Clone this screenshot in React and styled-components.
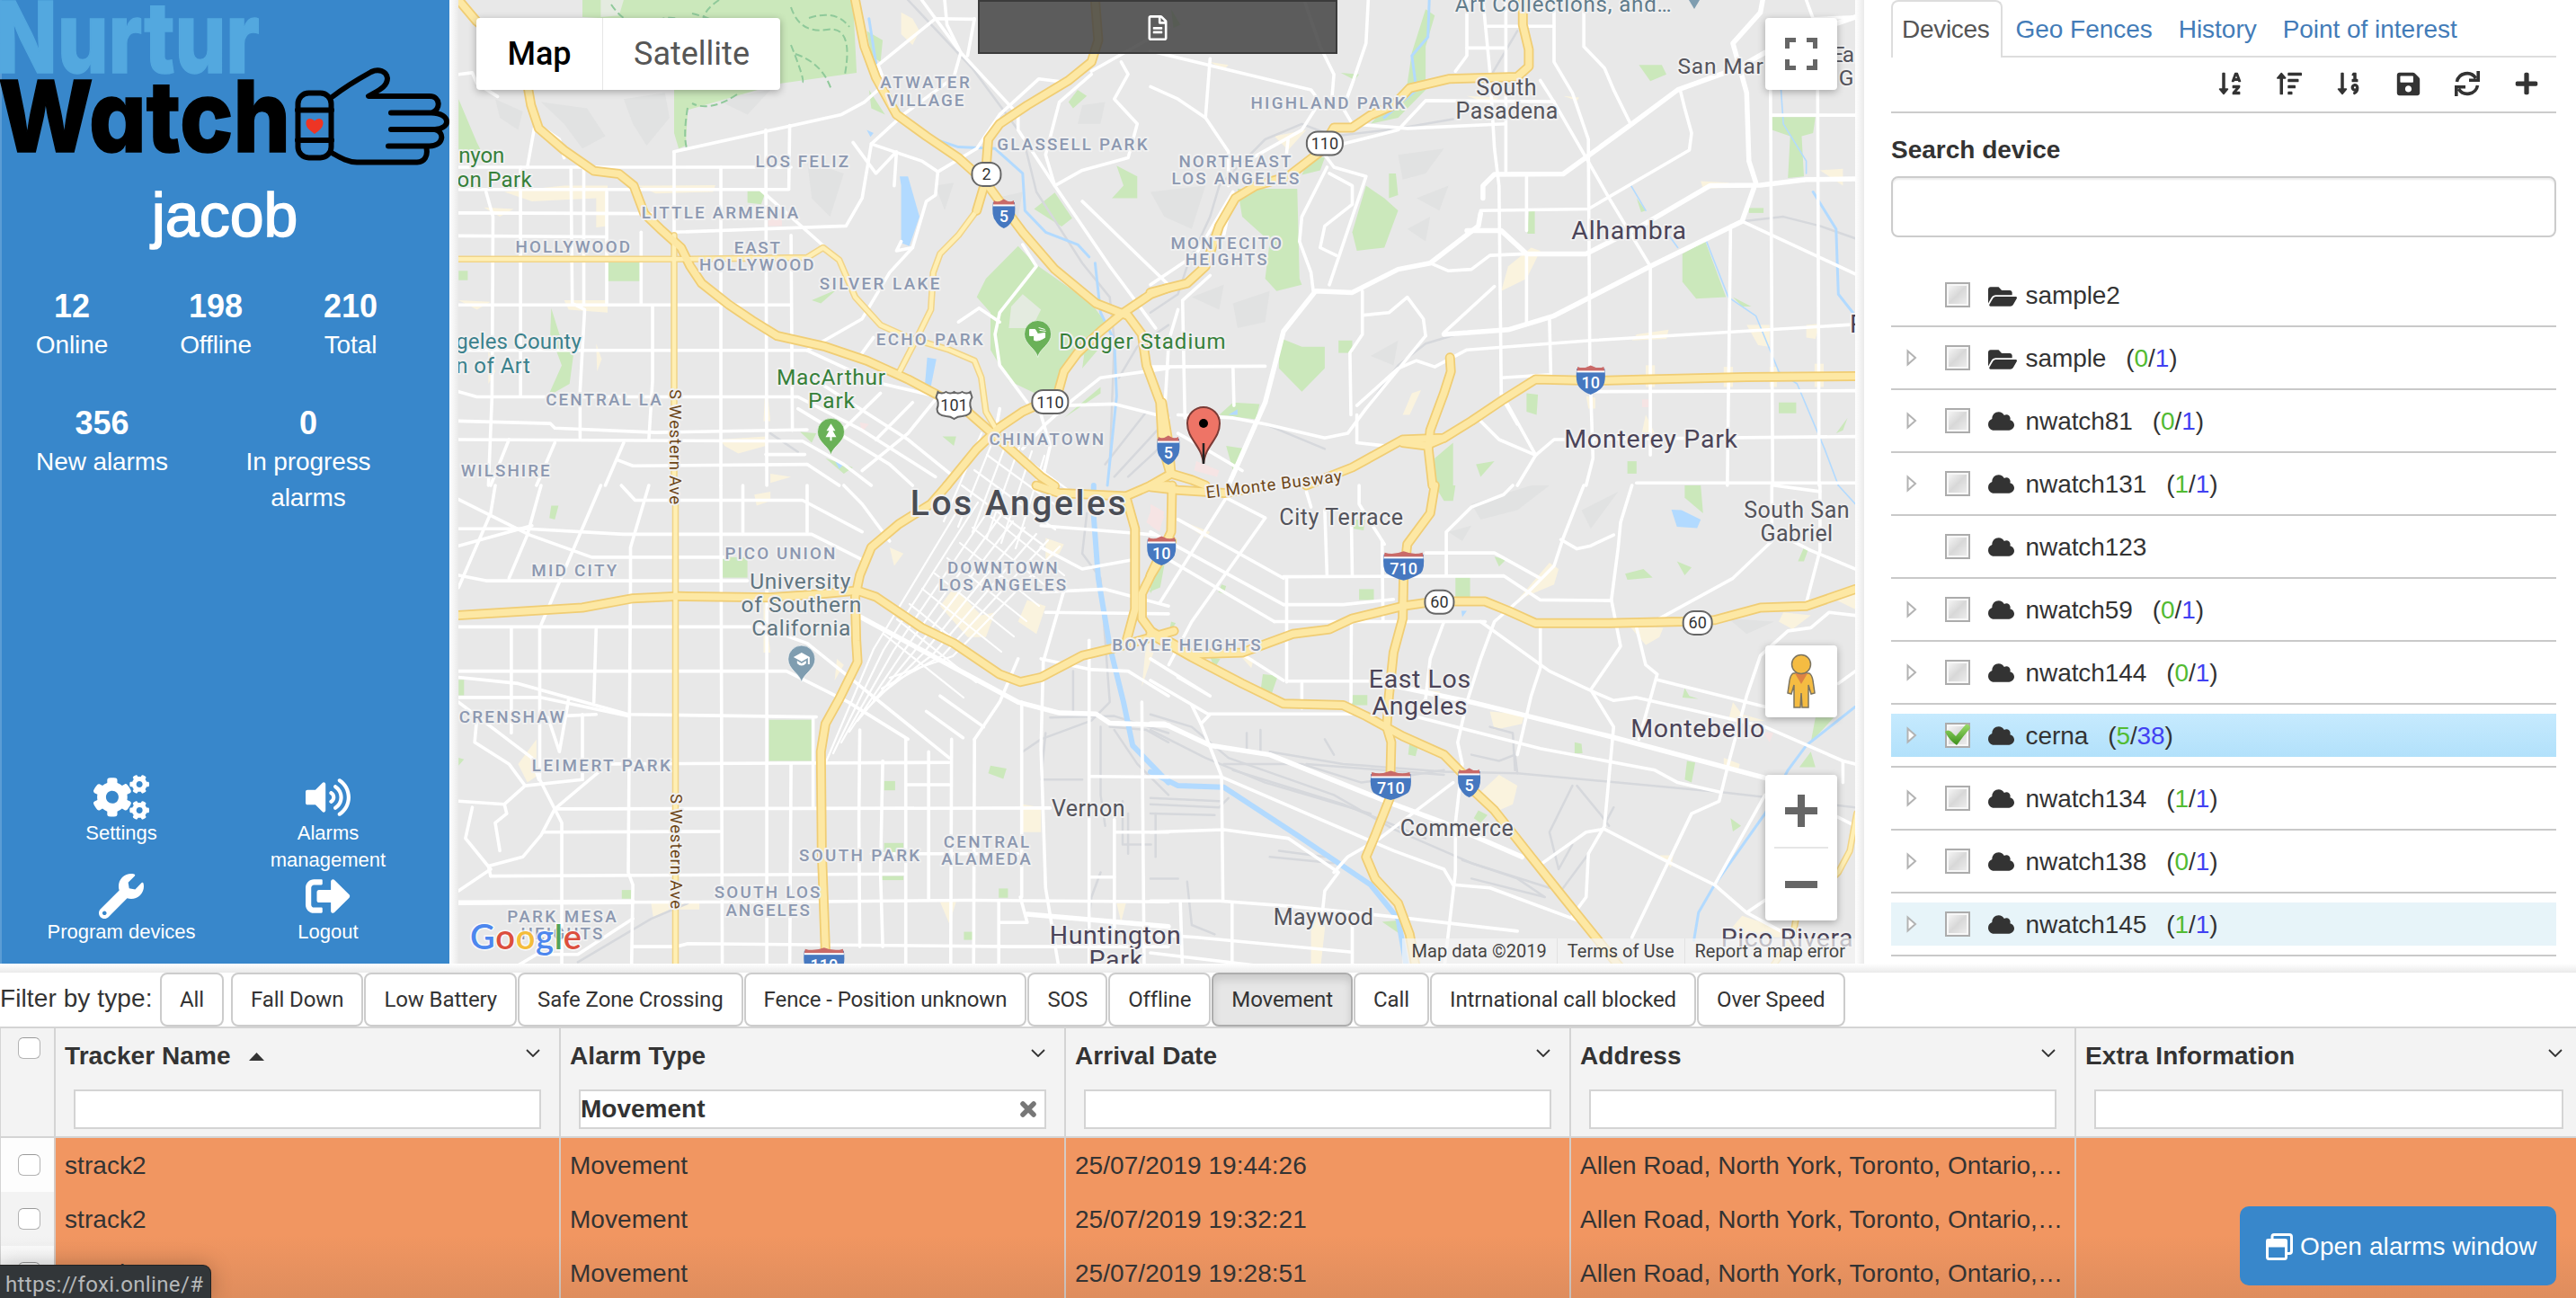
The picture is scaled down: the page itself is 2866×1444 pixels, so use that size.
import React from 'react';
import styled, { createGlobalStyle, css } from 'styled-components';
import {
  FaCogs, FaVolumeUp, FaWrench, FaSignOutAlt, FaSortAlphaDown, FaSortAmountUp,
  FaSortNumericDown, FaSave, FaPlus, FaCloud, FaFolderOpen, FaRegFileAlt,
} from 'react-icons/fa';

const sans = '"Liberation Sans", Arial, sans-serif';
const roboto = 'Roboto, "Liberation Sans", sans-serif';

const Global = createGlobalStyle`
  * { box-sizing: border-box; }
  html, body { margin: 0; padding: 0; background: #fff; }
  body { width: 2866px; height: 1444px; overflow: hidden; font-family: ${sans}; color: #333; }
`;

const Page = styled.div`
  position: relative;
  display: grid;
  grid-template-rows: 1072px 10px 362px;
  width: 2866px;
  height: 1444px;
  overflow: hidden;
`;
const Top = styled.div`
  display: grid;
  grid-template-columns: 500px 10px 1554px 10px 792px;
  min-height: 0;
`;
const GutterV = styled.div`background: linear-gradient(to right, #fff, #eaeaea);`;
const GutterH = styled.div`background: linear-gradient(to bottom, #fff, #eaeaea);`;

/* ---------- sidebar ---------- */
const Sidebar = styled.aside`
  display: flex;
  flex-direction: column;
  height: 1072px;
  background: #3887cb;
  border-left: 2px solid #5b9dd5;
  color: #fff;
`;
const Logo = styled.svg`display: block; width: 500px; height: 190px; margin-left: -2px; flex: none;`;
const UserName = styled.h1`
  margin: 9px 0 -1px -2px;
  font-size: 68px;
  line-height: 80px;
  font-weight: 400;
  text-align: center;
  -webkit-text-stroke: 1.5px #fff;
`;
const Stats = styled.div`
  display: grid;
  grid-template-columns: ${p => p.$cols};
  column-gap: ${p => p.$gap || 0}px;
  margin-top: ${p => p.$top}px;
  margin-left: -2px;
`;
const Stat = styled.div`
  text-align: center;
  font-size: 28px;
  line-height: 40px;
  letter-spacing: -0.1px;
  strong { display: block; font-size: 36px; line-height: 47px; letter-spacing: 0; }
`;
const Actions = styled.nav`
  display: grid;
  grid-template-columns: 230px 230px;
  margin: auto 0 20px 18px;
`;
const Action = styled.a`
  display: flex;
  flex-direction: column;
  align-items: center;
  text-align: center;
  width: 100%;
  padding: 0 30px 0;
  font-size: 22px;
  line-height: 30px;
  color: #fff;
  white-space: ${p => (p.$wrap ? 'normal' : 'nowrap')};
  svg {
    width: auto;
    height: ${p => (p.$large ? 62 : 50)}px;
    margin: ${p => (p.$large ? '-6px 0' : 0)};
    flex: none;
  }
`;

/* ---------- map ---------- */
const MapBox = styled.div`
  position: relative;
  height: 1072px;
  overflow: hidden;
  background: #e8e8e8;
  font-family: ${roboto};
`;
const MapSvg = styled.svg`display: block;`;
const floating = css`
  position: absolute;
  background: #fff;
  border-radius: 4px;
  box-shadow: 0 2px 8px rgba(0, 0, 0, 0.3);
`;
const TypeSwitch = styled.div`
  ${floating}
  left: 20px;
  top: 20px;
  display: flex;
  width: 338px;
  height: 80px;
  font-size: 36px;
  line-height: 81px;
`;
const TypeTab = styled.div`
  width: ${p => (p.$on ? 140 : 198)}px;
  text-align: center;
  color: ${p => (p.$on ? '#000' : '#565656')};
  font-weight: ${p => (p.$on ? 500 : 400)};
  & + & { border-left: 1px solid #e6e6e6; }
`;
const Report = styled.div`
  position: absolute;
  left: 578px;
  top: 0;
  width: 400px;
  height: 60px;
  display: flex;
  align-items: flex-start;
  justify-content: center;
  padding-top: 15px;
  background: rgba(64, 64, 64, 0.84);
  border: 2px solid #3b3b3b;
  color: #fff;
  font-size: 28px;
`;
const Control = styled.div`
  ${floating}
  right: 20px;
  top: ${p => p.$top}px;
  width: 80px;
  height: ${p => p.$h}px;
  display: flex;
  flex-direction: column;
  align-items: center;
  justify-content: center;
`;
const Divider = styled.div`width: 60px; height: 2px; background: #e6e6e6;`;
const ZoomCell = styled.div`flex: 1; display: flex; align-items: center;`;
const Credits = styled.div`
  position: absolute;
  right: 0;
  bottom: 0;
  display: flex;
  height: 28px;
  background: rgba(245, 245, 245, 0.7);
  font-size: 20px;
  line-height: 29px;
  color: #444;
  span { padding: 0 11px; letter-spacing: 0.03px; }
  span + span { border-left: 1px solid #e2e2e2; }
`;

/* ---------- devices ---------- */
const Devices = styled.section`
  display: flex;
  flex-direction: column;
  height: 1072px;
  overflow: hidden;
  padding: 0 22px 0 30px;
  font-size: 28px;
`;
const Tabs = styled.div`
  display: flex;
  flex: none;
  height: 64px;
  border-bottom: 2px solid #ddd;
`;
const Tab = styled.div`
  height: 64px;
  padding: ${p => (p.$on ? '0 10px' : '0 14.5px')};
  line-height: ${p => (p.$on ? 62 : 66)}px;
  letter-spacing: ${p => (p.$on ? -0.3 : -0.03)}px;
  white-space: nowrap;
  color: ${p => (p.$on ? '#555' : '#437cb8')};
  ${p => p.$on && css`
    width: 124px;
    background: #fff;
    border: 2px solid #ddd;
    border-bottom: 0;
    border-radius: 8px 8px 0 0;
  `}
`;
const Toolbar = styled.div`
  display: flex;
  flex: none;
  justify-content: flex-end;
  height: 62px;
  border-bottom: 2px solid #ccc;
`;
const Tool = styled.span`
  display: flex;
  align-items: center;
  justify-content: center;
  width: 66px;
  height: 58px;
  svg { height: ${p => p.$s || 28}px; width: auto; }
`;
const Label = styled.label`
  flex: none;
  margin-top: 21px;
  font-weight: 700;
  line-height: 40px;
`;
const Search = styled.input`
  flex: none;
  margin: 9px 0 30px;
  height: 68px;
  border: 2px solid #ccc;
  border-radius: 8px;
  box-shadow: inset 0 2px 2px rgba(0, 0, 0, 0.075);
`;
const Row = styled.div`
  flex: none;
  padding: 10px 0;
  height: 70px;
  border-bottom: 2px solid #c9c9c9;
`;
const RowInner = styled.div`
  display: flex;
  align-items: center;
  height: 48px;
  padding-left: 16px;
  line-height: 48px;
  letter-spacing: -0.08px;
  background: ${p => ({ on: 'linear-gradient(#c6eafe, #b2e1fb)', hover: '#e7f4f9' }[p.$state] || 'none')};
`;
const Expander = styled.svg`width: 14px; height: 20px; visibility: ${p => (p.$show ? 'visible' : 'hidden')};`;
const Box = styled.svg`width: 30px; height: 32px; margin: 0 19px 0 29px;`;
const Kind = styled.span`
  display: flex;
  width: 41.5px;
  font-size: ${p => (p.$folder ? 32 : 29)}px;
  margin-top: ${p => (p.$folder ? 4 : 0)}px;
`;
const Name = styled.span`margin-top: 2px;`;
const Count = styled.span`margin: 2px 0 0 22px;`;
const Green = styled.span`color: #52bb32;`;
const Blue = styled.span`color: #4141f2;`;

/* ---------- alarms grid ---------- */
const Bottom = styled.section`position: relative; display: flex; flex-direction: column; overflow: hidden; height: 362px;`;
const FilterBar = styled.div`display: flex; flex: none; height: 60px; font-size: 28px; line-height: 57px; white-space: nowrap;`;
const FilterLabel = styled.span`width: 178px; letter-spacing: 0.1px;`;
const FilterButton = styled.button`
  height: 60px;
  padding: 0 20px;
  margin: 0 ${p => p.$gap || 1}px 0 0;
  font: 400 24px/56px ${roboto};
  letter-spacing: -0.1px;
  color: #333;
  white-space: nowrap;
  background: ${p => (p.$on ? '#e6e6e6' : '#fff')};
  border: 2px solid ${p => (p.$on ? '#adadad' : '#ccc')};
  border-radius: 8px;
  box-shadow: ${p => (p.$on ? 'inset 0 6px 10px rgba(0,0,0,.125)' : 'none')};
`;
const Grid = styled.div`
  display: grid;
  grid-template-columns: 59px 562px 562px 562px 562px 558px;
  grid-template-rows: 122px repeat(3, 60px);
  border-top: 2px solid #d4d4d4;
  border-left: 1px solid #d4d4d4;
`;
const Head = styled.div`
  display: flex;
  flex-direction: column;
  background: #f3f3f3;
  border-left: 2px solid #d4d4d4;
  border-bottom: 2px solid #d4d4d4;
  padding: 11px ${p => (p.$last ? 14 : 20)}px 8px 10px;
`;
const HeadTitle = styled.div`
  display: flex;
  align-items: center;
  font-size: 28px;
  line-height: 40px;
  font-weight: 700;
  letter-spacing: 0.08px;
`;
const Sort = styled.svg`margin-left: 20px;`;
const Chevron = styled.svg`margin: -7px 1px 0 auto;`;
const HeadInput = styled.div`
  display: flex;
  align-items: center;
  justify-content: space-between;
  height: 44px;
  margin: 17px 0 0 10px;
  padding: 0 8px 0 0;
  background: #fff;
  border: 2px solid #d4d4d4;
  font-size: 28px;
  font-weight: 700;
`;
const CheckCell = styled.div`
  display: flex;
  justify-content: center;
  padding-top: ${p => (p.$head ? 10 : 18)}px;
  background: ${p => p.$bg};
  border-bottom: ${p => (p.$head ? '2px solid #d4d4d4' : 0)};
`;
const Check = styled.span`
  width: 25px;
  height: 24px;
  margin-left: 3px;
  border: 1.5px solid #b3b3b3;
  border-top-color: #999;
  border-radius: 6px;
  background: #fff;
`;
const Cell = styled.div`
  padding: 0 12px 0 10px;
  border-left: 2px solid #d6cbc4;
  background: #f19661;
  font-size: 28px;
  line-height: 61px;
  letter-spacing: 0.05px;
  overflow: hidden;
  text-overflow: ellipsis;
  white-space: nowrap;
`;
const Shade = styled.div`
  position: absolute;
  left: 0;
  right: 0;
  bottom: 0;
  height: 70px;
  background: linear-gradient(to bottom, rgba(60, 60, 60, 0), rgba(60, 60, 60, 0.1));
`;
const OpenAlarms = styled.button`
  position: absolute;
  right: 22px;
  bottom: 14px;
  display: flex;
  align-items: center;
  width: 352px;
  height: 88px;
  padding: 1px 0 0 29px;
  border: 0;
  border-radius: 10px;
  background: #3887cb;
  color: #fff;
  font: 28px ${sans};
  letter-spacing: 0.12px;
  white-space: nowrap;
  svg { margin-right: 8px; }
`;
const Status = styled.div`
  position: absolute;
  left: 0;
  bottom: 0;
  width: 234px;
  height: 36px;
  padding-left: 6px;
  background: #323639;
  border-radius: 0 8px 0 0;
  box-shadow: 0 0 0 1px #222, 0 0 24px rgba(0, 0, 0, 0.25);
  color: #b5b8ba;
  font: 24px/42px ${roboto};
  letter-spacing: 0.35px;
`;

/* ---------- map data: four survey sheets, each with its own origin ---------- */
const sheets = { A: [500, 0], B: [1280, 0], C: [500, 540], D: [1280, 540] };
const kx = 800 / 1568, ky = 540 / 1568;
const at = (s, x, y) => [sheets[s][0] + x * kx, sheets[s][1] + y * ky];
const pts = (s, str) => str.trim().split(/\s+/).map(p => {
  const [x, y] = p.split(',').map(Number);
  return at(s, x, y).map(n => n.toFixed(1)).join(',');
}).join(' ');
const list = o => Object.entries(o).flatMap(([s, t]) => t.split(';').map(x => x.trim()).filter(Boolean).map(x => pts(s, x)));

const freeways = list({
  A: `20,0 60,70 110,130 165,230 178,340 195,415 250,485 315,552 370,562 402,600 425,690 460,740 505,800 525,860 550,915 610,985 660,1035 715,1085 820,1120 910,1165 1000,1225 1070,1280 1130,1330 1180,1395 1230,1460 1290,1540 1320,1570;
  885,0 905,150 930,250 975,370 1040,440 1110,510 1170,590 1200,650 1250,750 1320,870 1410,980 1480,1020 1510,1080 1520,1180 1550,1300 1555,1440 1572,1530;
  1408,0 1415,130 1400,200 1350,260 1260,340 1200,400 1175,450 1168,590 1150,680;
  1568,930 1530,950 1465,1015 1420,1070 1370,1140 1340,1200 1325,1280 1250,1330 1200,1380 1150,1450 1085,1568`,
  B: `0,945 80,915 120,860 150,730 185,640 230,600 300,570 370,490 400,412 440,412 480,372 530,340 565,285 650,255 800,248 825,215 825,160 812,80 812,0;
  25,1300 38,1420 45,1530; 0,1568 45,1530 90,1550 120,1568;
  340,1568 440,1510 550,1420 640,1415 700,1360 770,1290 840,1225 960,1230 1090,1225 1300,1218 1537,1215;
  653,1155 655,1200 640,1270 610,1390 606,1450 615,1568; 550,1430 600,1440 640,1415`,
  C: `1085,0 1050,60 980,125 920,200 895,290 885,360 887,500 890,570 850,690 820,770 810,860 812,1180 820,1500;
  20,420 290,395 400,365 500,358 700,362 800,352 890,340 930,360 1030,460 1100,510 1200,610 1245,635 1290,620 1380,550 1450,525 1520,495 1580,470;
  1280,0 1330,25 1475,35 1530,0 1568,0; 1475,35 1495,140 1495,400 1475,510; 1575,180 1530,290 1510,350 1510,430 1540,490 1590,530`,
  D: `0,470 90,545 200,540 310,480 390,465 440,430 550,390 620,375 730,375 780,405 840,445 1000,445 1160,440 1230,435 1330,395 1430,390 1537,335;
  0,480 90,555 200,640 290,705 420,710 470,745 550,810 640,870 680,930 700,980 750,1050 830,1200 900,1330 1030,1568;
  620,0 610,90 560,190 552,300 550,430 530,540 520,680 515,780 525,830 522,1010 490,1130 470,1200 490,1270 540,1350 565,1450 580,1568;
  0,5 60,15 160,25 260,0; 47,0 45,150 0,290`,
});
const arterials = list({
  A: `20,837 520,837 780,832 815,800 850,840 885,960 940,1050 1000,1090 1090,1130 1145,1165 1160,1220 1170,1330 1190,1380; 1150,680 1110,760 1070,820 1055,880 1050,1000 1020,1090 980,1205; 490,760 490,1568`,
  C: '493,0 493,1568',
  D: '1540,1060 1525,1180 1500,1250 1410,1380 1400,1460 1350,1568',
});
const streets = list({
  A: `20,540 745,540; 20,612 740,612; 20,688 440,690; 20,762 340,765; 20,985 745,985; 20,1132 780,1132 850,1180 930,1235 1060,1280; 20,1265 60,1282 760,1282 900,1390 1060,1540; 20,1360 220,1368 230,1383 450,1397 700,1390 780,1388; 20,1420 770,1425 860,1500 920,1568; 365,1485 400,1505 780,1500; 690,1468 775,1468;
  80,620 95,700 93,1280 85,1568; 155,540 155,1280; 170,540 185,415 210,420 240,450 250,510; 265,540 268,980 295,1000 285,1260 285,1415; 293,540 293,980; 343,620 343,980; 418,750 418,980; 443,990 443,1230 435,1420; 592,540 592,1568; 690,420 692,1568; 742,405 740,610; 745,760 748,1390; 490,490 490,760; 490,490 855,370 905,330 950,270 935,210 1060,60 1145,62; 1080,0 1085,80 1115,170 1100,250 990,370 920,465 900,640 865,730 490,750; 680,615 820,800; 920,465 1030,520 1065,555 1060,630 1040,650 1010,800 975,810 985,780; 1065,555 1150,480 1200,370 1285,255 1340,265; 1030,0 1110,160; 1145,60 1130,180; 1115,170 1240,370 1240,420 1320,600 1440,860 1470,920 1540,1060; 1400,240 1330,330 1300,500 1320,600; 1320,600 1380,550 1480,510 1500,400 1450,320 1480,240 1465,200; 1400,230 1568,90; 880,460 930,560 975,490 970,600; 1010,800 960,880 900,1030 780,1132; 1250,790 1280,860 1200,1010 1190,1080 1200,1180 1260,1300; 1110,1040 1155,995 1200,1040; 900,1140 925,1090; 1568,1190 1420,1220 1360,1290 1300,1370 1250,1450; 1340,1310 1450,1305 1568,1350; 1380,650 1568,920; 20,240 50,235 60,270 105,312; 380,1430 340,1568; 230,1430 190,1568; 130,1420 90,1568; 800,1230 1000,1420 1100,1540; 760,1320 960,1500 1010,1568; 1060,1290 1000,1400 900,1520; 940,1270 850,1400; 1010,1300 930,1420; 1290,1340 1310,1440 1290,1568; 1200,1320 1190,1400; 780,1500 850,1568`,
  B: `0,165 350,290 360,310; 130,190 120,380 170,490 170,600; 335,0 370,150 400,240 395,330; 475,0 470,140 440,270 420,350 440,400 560,415 775,400; 0,280 60,320 120,380; 360,350 330,420 210,520; 300,450 295,520; 420,465 540,420 600,325 880,328; 775,0 775,560; 690,0 690,180 665,230; 725,0 740,230 750,480 760,600 765,1280 800,1370; 690,155 775,155; 735,85 880,85; 880,0 880,200 920,300 955,450 958,1180 965,1480 950,1568; 945,0 945,150 990,220 1010,290 1045,395; 850,260 880,330 950,510 1000,640 1090,860 1090,1470; 720,680 955,675 1175,485 1180,430 1165,350 1155,290; 610,850 650,875 700,870 740,825 820,820; 820,820 820,1040; 820,565 820,745; 1290,715 1537,885; 1265,730 1258,1568; 1352,290 1357,1568; 1455,290 1458,1568; 1355,372 1537,372; 1430,0 1445,60 1537,55; 600,1085 470,1320 430,1400 380,1415 250,1370 180,1350 60,1340; 600,1085 595,1030 560,960 520,1010 465,1018; 462,940 462,1080 435,1140 437,1340; 450,1340 450,1430 510,1440; 450,1310 540,1190 580,1165 620,1185 690,1130 960,1100 1537,1048; 640,1075 750,925; 870,1030 873,1210 765,1220; 765,1270 840,1470 800,1568; 720,1360 760,1420 840,1470 880,1420 1537,1410; 960,1265 1537,1262; 1060,1560 1537,1560; 0,1185 250,1183; 180,1185 182,1310; 380,500 400,540 470,570 390,920; 385,540 330,700 325,780 350,880 355,940; 390,560 440,600 440,660 380,730 370,800 405,825; 0,920 100,820 180,620 160,760 100,890; 130,890 70,970 75,1350; 60,1000 40,1100 30,1350; 60,1400 120,1450 200,1520`,
  C: `20,45 175,160 310,232 480,232 600,232; 20,140 170,140 380,158 790,158 900,240; 20,195 180,130; 20,290 80,308 650,308; 20,457 680,457 780,510 1090,880; 20,600 735,600 870,700 1000,820; 20,620 150,640 390,740 800,748; 20,685 200,685 390,745; 240,745 320,740; 350,900 1090,895; 230,1045 1310,1042; 205,1120 590,1118; 90,1262 990,1255; 20,1348 760,1345 1130,1340 1568,1345; 400,1490 495,1490 520,1480 1230,1490 1568,1490; 920,1190 1240,1190; 995,967 1090,967; 1200,1412 1260,1412 1245,1330;
  135,460 135,800; 197,460 197,950 245,1090 245,1560; 320,460 315,700; 395,310 390,1250 400,1290 397,1568; 592,0 595,1568; 692,310 692,1568; 745,900 742,1568; 793,750 793,1040; 895,790 893,1080 895,1490; 945,890 940,1250 945,1490; 995,820 995,1568; 1045,860 1045,1340; 1095,820 1093,1568; 1145,820 1143,1568; 1198,1345 1198,1568; 1248,700 1248,1330; 1340,340 1295,570 1290,850 1300,1300 1330,1568; 1395,500 1395,1568; 1450,1080 1450,1480; 1510,700 1515,1568; 100,0 90,90 20,330; 200,0 170,160 130,300; 330,0 200,450; 435,0 395,200 395,310; 375,0 405,48 770,48 900,150; 20,700 180,880 195,950; 60,750 55,830 130,900 165,970 290,950; 20,1020 120,1030 165,970; 50,1040 35,1140 90,1240 20,1310; 120,1030 125,1060 100,1090 110,1180; 90,1262 85,1230 160,1200 200,1130 230,1045 330,920; 290,740 290,950; 260,690 240,860 215,750; 130,1568 190,1515 280,1515 400,1400; 1290,130 1540,160; 1290,345 1430,335 1568,390; 1300,410 1568,415; 1290,560 1400,595 1480,600 1568,680; 1395,940 1568,942; 1450,1120 1568,1120; 1395,1265 1450,1265; 780,0 780,150; 860,0 900,60 960,180; 1290,200 1380,270 1490,240; 1145,820 1200,700 1240,560; 1040,730 1120,815; 1070,680 1165,780; 640,0 640,158`,
  D: `165,40 20,380; 250,105 90,440 40,580; 60,110 290,300; 0,150 290,385; 0,205 270,440; 165,40 250,105; 290,295 770,292 850,370 1005,372; 290,385 420,385 530,368; 270,440 730,440; 600,218 750,218 850,300; 297,300 297,635; 380,80 385,290; 438,120 440,290; 438,440 437,700; 505,180 507,440; 510,190 480,120 455,60 455,0; 350,70 340,20; 645,290 645,150 700,70 770,30 790,0; 640,440 610,560 600,690 570,740; 945,0 900,170 880,260 820,350 750,440 720,560 690,700 670,830 680,900 665,1090 665,1250 640,1568; 720,440 870,600 970,670 1010,695 1060,685 1340,780 1510,890 1537,900; 895,175 930,205 960,195 1010,160; 1050,0 1025,120 1020,200 1005,370 1025,520 960,660 1010,780 990,1100 955,1190 950,1330 920,1390; 850,460 850,590 830,680 800,870; 1060,460 1080,580 1105,610 1065,820; 1105,628 1340,715; 1355,0 1355,180 1270,300 1110,430; 1360,150 1440,210 1537,270; 1460,0 1460,210 1430,380; 1360,0 1460,20; 1537,420 1480,410 1440,460 1390,470 1330,550 1300,680 1260,900 1240,1020 1180,1060 1050,1460; 560,740 850,850 1100,920 1150,960 1240,990; 300,632 510,632; 0,560 130,680 60,620; 0,630 125,738 440,738; 200,545 290,630; 110,770 155,940 158,1340; 130,740 110,770 90,710; 0,942 155,942 530,1180 640,1240 660,1290 740,1300 940,1410; 0,1120 160,1112 300,1140 410,1250 380,1310 375,1380; 660,960 500,1140 430,1200 400,1250; 0,1342 150,1342 310,1360 540,1395 800,1440; 0,1450 100,1460 440,1508; 65,1345 70,1568; 178,1350 178,1568; 850,1225 950,1120 990,1110 1120,1210 1230,1290 1300,1380 1400,1460; 1230,1290 1340,1000; 1300,1380 1340,1340; 1500,640 1537,600; 440,1420 440,1568; 330,640 330,720; 0,1510 280,1560; 1470,1050 1537,1100; 1510,890 1510,960`,
});
const mains = list({
  B: '720,690 715,730 610,850 540,870 440,945 360,940 290,1070 250,1300 170,1568; 690,745 765,745 820,820 950,820 1070,730 1220,600 1330,598 1430,580 1537,578; 725,640 725,600 750,563 900,562 1050,400 1150,290 1280,220 1340,170; 640,1080 780,1065 880,1020 1090,860 1290,715 1320,590 1305,520 1300,300 1270,140 1330,40 1335,0; 1410,120 1537,55',
  C: '890,420 1240,700 1330,735 1410,738 1440,768 1568,775; 1260,1385 1568,1425; 20,1348 400,1345',
  D: '0,770 30,770 130,840 260,870 530,1030 640,1090 810,1200; 540,650 700,700 1000,810 1340,945',
});
const rails = list({
  A: '1000,0 1140,220 1250,440 1280,620 1380,850 1440,960 1450,1100 1440,1500; 1568,1050 1500,1120 1460,1220; 700,1400 760,1460; 1520,1330 1430,1500; 1568,1350 1450,1540; 1568,1420 1480,1540',
  B: '0,1010 60,950 80,860 130,700 150,600 250,450 330,400 400,440 540,415 660,385; 450,1360 540,1180 600,1110 690,1070; 250,1370 380,1450; 800,100 740,250; 1290,715 1380,700 1460,730 1537,770',
  C: '1390,90 1380,220 1420,300 1430,500 1440,700 1400,760 1290,820 1250,860; 1310,750 1450,745 1568,800; 1300,800 1290,950 1380,950; 1420,780 1420,1000 1430,1100; 1450,790 1500,900 1568,1000; 1480,1060 1480,1190; 1360,600 1360,740; 280,1540 440,1400 520,1350; 1540,1060 1540,1200; 1468,1020 1468,1160 1530,1160; 1420,1250 1400,1330 1390,1460; 1440,780 1520,790 1568,830',
  D: '0,740 90,780 170,880 400,1000 530,1110 700,1220 870,1300; 160,900 330,900 460,960 640,920; 260,860 420,900 640,925 800,930 1240,990 1537,1040; 0,790 120,880 250,960 480,1060; 340,900 640,935; 180,920 420,1030 600,1140; 700,870 760,890 795,870 800,930; 740,780 790,800 795,920; 0,1010 150,1020; 0,1060 140,1065; 920,970 870,1120 890,1240 920,1160; 1010,1040 960,1180 900,1300; 240,790 240,860; 380,820 400,870; 210,800 210,850; 80,1280 90,1420 140,1450; 260,1200 400,1220; 280,1180 380,1200; 0,1030 150,1040 170,1010; 930,970 980,1060 1000,1100; 680,1210 800,1270 860,1330 700,1270; 0,1270 60,1270',
});
const river = list({
  A: '915,60 935,250 985,370 1050,445 1110,475 1190,480 1250,560 1255,680 1300,750 1370,790 1395,830; 1408,850 1420,1010 1450,1100 1455,1280 1435,1568',
  B: '608,0 605,120 570,180 580,290 510,380; 1445,620 1495,740 1500,950 1537,1020',
  D: '1537,715 1430,840 1390,920 1340,1060 1230,1290 1195,1380 1185,1470',
});
const creeks = list({
  B: '1210,770 1260,960 1320,1020 1370,1200 1410,1240 1470,1450 1500,1568; 1375,290 1380,400 1430,520 1430,560; 1048,600 1080,680; 1125,750 1150,800',
  D: '1500,0 1537,60',
});
const channel = list({ C: '1405,0 1405,100 1415,300 1440,520 1470,700 1490,840 1568,960', D: '0,925 60,970 160,975 320,1130 480,1290 540,1400 560,1568' });
const parks = list({
  A: '290,0 880,0 888,235 720,270 520,355 515,470 500,480 490,430 490,280 350,60 290,55; 20,320 60,460 70,490 20,490; 1240,795 1275,850 1400,980 1430,1040 1420,1100 1340,1200 1320,1260 1290,1280 1220,1230 1180,1130 1180,1010 1150,960 1170,900; 345,845 415,845 415,908 345,908; 222,995 240,1080 270,1150 262,1240 215,1280 245,1180 220,1080; 650,617 690,617 680,660 650,655; 790,970 845,935 810,980; 1320,622 1358,705 1335,732 1275,675; 1455,535 1500,570 1500,640 1445,640 1470,600; 1370,290 1390,310 1360,350 1350,330; 1340,1350 1420,1250 1420,1270 1350,1340; 910,100 945,130 940,200 920,180; 20,875 40,875 40,905 20,905; 765,1395 800,1400 790,1430; 820,1480 880,1510 860,1530; 1075,1410 1105,1410 1100,1440; 915,290 950,370 920,350; 1390,1080 1420,1120 1380,1190',
  B: '190,610 320,610 325,900 330,920 275,940 250,900 260,780 200,700; 470,600 510,640 540,680 510,800 450,810 440,750; 280,1090 330,1120 380,1120 380,1190 330,1265 280,1190; 410,1100 440,1100 440,1140 410,1140; 1160,820 1210,780 1255,960 1190,965 1160,910; 1270,960 1310,990 1290,990; 1355,378 1450,378 1445,430 1420,440 1425,570 1390,575 1395,440 1355,420; 825,680 838,680 838,755 822,755; 1065,210 1115,210 1125,240 1090,262; 600,30 620,50 600,150 600,290 540,380 480,400 560,270 570,170; 415,235 455,240 445,258; 180,1300 238,1305 230,1355 150,1340; 165,1440 210,1450 180,1520; 1370,1300 1408,1300 1408,1335 1370,1335; 820,1270 845,1275 842,1340 820,1330; 710,1500 750,1490 720,1540; 1040,1490 1060,1490 1060,1530 1040,1530; 620,1480 660,1430 660,1568 615,1568; 1060,640 1080,680 1070,685; 1305,672 1337,672 1337,688 1305,688; 520,560 535,560 540,630 520,640; 45,30 65,80 50,90; 350,500 380,510 370,550 330,565; 1495,1400 1520,1350 1510,1390',
  C: '697,757 790,757 790,890 697,890; 593,232 650,232 650,298 593,298; 20,628 32,628 32,678 20,678; 222,65 238,65 230,110 218,105; 1180,905 1215,915 1208,948 1175,930; 948,955 972,955 972,985 948,985; 948,1155 990,1155 990,1185 948,1185; 942,1262 990,1262 990,1275 942,1275; 1198,1302 1218,1302 1218,1332 1198,1332; 1122,1442 1142,1442 1142,1468 1122,1468; 376,1307 397,1307 397,1335 376,1335; 1525,345 1560,250 1550,330; 20,880 32,885 20,905',
  D: '1165,0 1200,0 1205,90 1165,40; 620,0 665,0 660,50 640,50; 1035,285 1075,270 1095,298 1040,305; 1148,245 1180,265 1165,290; 665,297 697,297 697,360 665,360; 455,335 487,335 487,370 455,370; 245,610 278,615 265,670 240,665; 440,677 473,677 473,710 440,710; 130,555 152,560 140,590; 565,830 585,835 578,875 562,870; 925,830 940,835 942,865 925,865; 1170,890 1188,895 1180,960 1165,950; 1165,655 1175,680 1195,690 1160,685; 1450,750 1490,750 1440,830; 1440,860 1450,910 1415,910; 1265,1075 1288,1100 1270,1118; 715,1050 735,1065 720,1090 705,1075; 505,1410 540,1405 545,1450; 1425,200 1435,205 1425,245 1412,245; 750,230 775,240 760,262; 445,110 468,110 465,145 443,140; 155,320 165,325 160,350 148,345; 45,440 55,445 40,480; 0,260 30,260 0,350',
});
const blocks = list({
  A: '120,620 250,600 345,600 345,730 320,735 320,640 180,650; 410,600 580,598 575,620 450,625; 985,40 1010,60 1025,100 1010,145 985,110; 690,1210 700,1360 685,1360; 590,1420 690,1410 690,1440 630,1465 600,1440; 250,970 345,970 345,1010 260,1000; 75,670 140,675 110,700; 85,1130 100,1200 85,1240; 320,1110 332,1160 322,1200; 700,1530 745,1540 700,1560; 20,970 90,975 60,1000',
  B: '780,860 830,800 850,810 820,900 765,940; 1300,1050 1350,1050 1350,1120 1325,1115; 1430,1050 1460,1045 1450,1095 1430,1090; 270,440 340,420 300,485; 1080,1340 1100,1400 1070,1410; 570,1270 590,1260 565,1340 550,1340; 1200,585 1260,590 1270,605 1205,610; 1460,550 1510,545 1510,600; 1060,1080 1130,1065 1125,1095 1050,1100; 130,200 170,210 160,225; 950,1280 970,1285 970,1320 955,1320; 900,310 935,315 930,325; 690,310 760,315 740,335; 1080,1180 1100,1180 1100,1250 1080,1250; 1250,1185 1270,1185 1270,1250 1250,1250; 1350,1185 1366,1185 1366,1250 1350,1250; 1448,1175 1468,1175 1468,1250 1448,1250',
  C: '1070,390 1100,330 1160,420 1190,410 1170,490 1130,490; 1260,370 1300,390 1280,480 1240,440; 1250,1030 1290,1040 1290,1120 1250,1120; 150,900 190,820 190,940 170,960; 440,1350 545,1345 545,1370 480,1370 445,1400; 1070,1345 1105,1345 1090,1415; 960,200 990,220 970,260; 665,30 700,20 700,50 670,65; 1300,170 1340,190 1330,220 1300,240; 685,360 700,540 685,540; 845,560 860,580 840,630; 1520,500 1540,520 1510,650; 1455,1350 1475,1350 1465,1410',
  D: '720,990 760,935 800,970 790,1030 760,1050; 740,730 815,740 810,770 750,790; 870,250 890,270 880,320 800,370; 1045,455 1118,460 1110,490 1080,515; 1380,410 1440,420 1400,465 1370,440; 1290,1390 1390,1440 1380,1460 1250,1460; 1495,370 1537,350 1537,400; 1270,700 1290,740 1340,760 1260,760; 1250,880 1285,900 1280,930 1250,910; 190,540 225,560 220,590; 1110,1195 1140,1195 1135,1235; 350,1360 385,1370 370,1568 350,1560; 60,110 130,150 120,170; 560,660 630,665 640,690',
});
const pink = list({ A: '695,700 725,700 725,730 695,730; 895,1365 915,1370 900,1395', B: '100,1490 150,1520 145,1540 95,1520; 1072,1290 1086,1290 1086,1315 1072,1315', C: '1530,80 1560,100 1545,145 1520,120', D: '0,60 30,85 20,150 0,130; 1335,795 1358,800 1350,830' });
const lakes = list({ A: '982,570 1000,570 1025,700 1003,795 985,785 985,600; 1042,1155 1062,1160 1050,1248 1037,1240; 910,420 925,430 918,442; 838,1480 860,1500 850,1515', B: '170,1340 190,1322 190,1340', D: '1136,78 1158,80 1200,110 1192,138 1148,134; 678,405 690,405 680,425' });
const hills = list({
  A: '200,330 300,350 340,440 290,480 250,400; 380,320 470,300 480,380 430,470 400,400; 1190,640 1250,620 1240,700 1200,720; 780,520 860,560 830,700 790,640; 580,320 700,290 650,370; 1380,340 1430,330 1420,400 1370,400; 1060,600 1100,590 1080,680; 100,320 160,360 150,420 110,380',
  B: '0,620 120,600 90,740 30,700; 180,980 260,940 250,1040 190,1060; 540,500 640,480 600,560 550,580; 480,1150 540,1100 530,1180; 580,640 650,600 630,680; 90,960 160,920 150,1000; 560,740 610,700 600,780',
  D: '700,60 830,0 870,0 800,80 720,110; 940,80 1020,20 960,140; 650,150 700,130 680,180; 1260,430 1360,440 1300,480',
});
const downtown = [];
for (let i = 0; i < 9; i++) downtown.push(`${918 + i * 9},${850 - i * 12} ${972 + i * 11},${722 + i * 1} ${1075 + i * 13},${552 + i * 7}`);
for (let i = 0; i < 9; i++) downtown.push(`${984 + i * 14},${706 - i * 17} ${1072 + i * 14},${776 - i * 17}`);
for (let i = 0; i < 6; i++) downtown.push(`${1092 + i * 14},${482 + i * 5} ${1050 + i * 16},${580 + i * 6}`);
for (let i = 0; i < 4; i++) downtown.push(`${1070 + i * 14},${540 - i * 17} ${1160 + i * 14},${606 - i * 17}`);

const hood = '#8c98b0', town = '#54545c', city = '#4b4458', park = '#36803a', teal = '#3b818c';
const LABELS = [
  ['A', 1037, 286, 195, 'ATWATER'], ['A', 1038, 342, 168, 'VILLAGE'], ['A', 1358, 484, 328, 'GLASSELL PARK'], ['A', 769, 539, 203, 'LOS FELIZ'],
  ['A', 590, 705, 342, 'LITTLE ARMENIA'], ['A', 269, 815, 250, 'HOLLYWOOD'], ['A', 671, 818, 100, 'EAST'], ['A', 670, 873, 250, 'HOLLYWOOD'],
  ['A', 938, 934, 262, 'SILVER LAKE'], ['A', 1047, 1114, 233, 'ECHO PARK'], ['A', 336, 1309, 252, 'CENTRAL LA'], ['A', 1302, 1436, 250, 'CHINATOWN'],
  ['A', 122, 1540, 194, 'WILSHIRE'], ['B', 387, 350, 337, 'HIGHLAND PARK'], ['B', 184, 540, 245, 'NORTHEAST'], ['B', 185, 594, 278, 'LOS ANGELES'],
  ['B', 165, 803, 242, 'MONTECITO'], ['B', 165, 857, 178, 'HEIGHTS'], ['C', 721, 237, 241, 'PICO UNION'], ['C', 272, 292, 186, 'MID CITY'],
  ['C', 1206, 284, 240, 'DOWNTOWN'], ['C', 1206, 340, 278, 'LOS ANGELES'], ['C', 1607, 533, 324, 'BOYLE HEIGHTS'], ['C', 136, 768, 230, 'CRENSHAW'],
  ['C', 331, 922, 302, 'LEIMERT PARK'], ['C', 894, 1213, 263, 'SOUTH PARK'], ['C', 1171, 1169, 187, 'CENTRAL'], ['C', 1170, 1224, 195, 'ALAMEDA'],
  ['C', 693, 1334, 231, 'SOUTH LOS'], ['C', 694, 1390, 183, 'ANGELES'], ['C', 245, 1410, 238, 'PARK MESA'], ['C', 245, 1466, 178, 'HEIGHTS'],
].map(l => [...l, 18.8, hood, 500]).concat([
  ['A', 70, 526, 100, 'nyon', 24, park], ['A', 98, 603, 163, 'on Park', 24, park], ['A', 151, 1127, 274, 'geles County', 24, teal], ['A', 95, 1204, 162, 'n of Art', 24, teal],
  ['A', 832, 1242, 237, 'MacArthur', 24.5, park], ['A', 833, 1317, 102, 'Park', 24.5, park], ['A', 1511, 1127, 363, 'Dodger Stadium', 24, park],
  ['B', 900, 38, 472, 'Art Collections, and…', 24, '#607b8b'], ['B', 776, 307, 132, 'South', 25, town], ['B', 777, 382, 223, 'Pasadena', 25, town],
  ['B', 1043, 773, 250, 'Alhambra', 28.5, city], ['B', 1243, 237, 187, 'San Mar', 24.5, town], ['B', 1511, 200, 48, 'Ea', 24.5, town], ['B', 1517, 275, 30, 'G', 24.5, town],
  ['B', 1091, 1445, 378, 'Monterey Park', 28.5, city], ['B', 1542, 1075, 34, 'R', 28.5, city], ['C', 1240, 95, 470, 'Los Angeles', 39, '#4a4d55', 500],
  ['C', 765, 333, 220, 'University', 24.5, '#607580'], ['C', 767, 408, 262, 'of Southern', 24.5, '#607580'], ['C', 767, 485, 216, 'California', 24.5, '#607580'],
  ['C', 1393, 1070, 160, 'Vernon', 25, town], ['C', 1452, 1482, 286, 'Huntington', 28.5, city], ['C', 1453, 1560, 117, 'Park', 28.5, city],
  ['D', 416, 128, 270, 'City Terrace', 25, town], ['D', 1409, 104, 230, 'South San', 25, town], ['D', 1409, 180, 158, 'Gabriel', 25, town],
  ['D', 587, 652, 222, 'East Los', 28.5, city], ['D', 587, 740, 208, 'Angeles', 28.5, city], ['D', 1193, 813, 292, 'Montebello', 28.5, city],
  ['D', 668, 1133, 247, 'Commerce', 25, town], ['D', 377, 1420, 218, 'Maywood', 25, town], ['D', 1388, 1490, 288, 'Pico Rivera', 28.5, city],
]);

const Lines = ({ d, stroke, w }) => (
  <g fill="none" stroke={stroke} strokeWidth={w} strokeLinejoin="round" strokeLinecap="round">
    {d.map((p, i) => <polyline key={i} points={p} />)}
  </g>
);
const Areas = ({ d, fill }) => <g fill={fill}>{d.map((p, i) => <polygon key={i} points={p} />)}</g>;

const Haloed = styled.g`text { paint-order: stroke; }`;

const Interstate = ({ s, x, y, n, w = 26 }) => {
  const [cx, cy] = at(s, x, y);
  const h = w / 2;
  return (
    <g transform={`translate(${cx} ${cy})`}>
      <path d={`M${-h + 1} -12 Q${-h - 1} 4 ${-h + 4} 9 Q${-h / 2} 14 0 17 Q${h / 2} 14 ${h - 4} 9 Q${h + 1} 4 ${h - 1} -12Z`} fill="#4678c0" />
      <path d={`M${-h + 1} -9 L${-h + 2} -14 Q${-h / 2} -11 0 -15.5 Q${h / 2} -11 ${h - 2} -14 L${h - 1} -9Z`} fill="#c96a68" />
      <rect x={-h + 1} y="-9.5" width={w - 2} height="2" fill="#fff" />
      <text y="10" textAnchor="middle" fontSize="18" fontWeight="500" fill="#fff">{n}</text>
    </g>
  );
};
const StateRoute = ({ s, x, y, n, w = 32 }) => {
  const [cx, cy] = at(s, x, y);
  return (
    <g transform={`translate(${cx} ${cy})`}>
      <rect x={-w / 2} y="-13" width={w} height="26" rx="12" fill="#fff" stroke="#666" strokeWidth="2" />
      <text y="6.500" textAnchor="middle" fontSize="18" fill="#333">{n}</text>
    </g>
  );
};
const Poi = ({ s, x, y, fill, children }) => {
  const [cx, cy] = at(s, x, y);
  return (
    <g transform={`translate(${cx} ${cy})`}>
      <path d="M0 40C-2 30 -15 26 -15 14A15 15 0 0 1 15 14C15 26 2 30 0 40Z" fill={fill} stroke="#fff" strokeOpacity=".6" />
      {children}
    </g>
  );
};

function CityMap() {
  return (
    <MapSvg width="1554" height="1072" viewBox="510 0 1554 1072" fontFamily={roboto}>
      <rect x="510" width="1554" height="1072" fill="#e8e8e8" />
      <Areas d={hills} fill="#e1e2e2" />
      <Areas d={blocks} fill="#faf3de" />
      <Areas d={pink} fill="#f6e4e4" />
      <Areas d={parks} fill="#cbe8bb" />
      <Areas d={list({ A: '1250,950 1290,1000 1270,1060 1220,1060 1225,990; 330,0 380,0 370,50 330,55' })} fill="#e4ebe0" />
      <g fill="none" stroke="#8fc99a" strokeWidth="2" strokeDasharray="8 4">
        <path d="M680 5q20 30 50 18t45 20M800 0q-30 20-10 40t60 10M880 8q10 30 40 25t20 50M885 60q30 10 40 40M900 20q30-10 45 10M770 15q40 10 30 20M820 105q-30 20-50 10M880 50q20 50 10 40M765 120q-5 30-1 45" />
      </g>
      <Lines d={rails} stroke="#d6d8dc" w={2.5} />
      <Areas d={lakes} fill="#b2daff" />
      <Lines d={creeks} stroke="#b2daff" w={1.6} />
      <Lines d={river} stroke="#b2daff" w={3} />
      <Lines d={channel} stroke="#b2daff" w={6} />
      <Lines d={downtown} stroke="#fff" w={2.2} />
      <Lines d={streets} stroke="#fff" w={3.6} />
      <Lines d={mains} stroke="#fff" w={5.5} />
      <Lines d={arterials} stroke="#f1d488" w={7.5} />
      <Lines d={freeways} stroke="#f0cd74" w={11} />
      <Lines d={arterials} stroke="#ffefb4" w={4.5} />
      <Lines d={freeways} stroke="#fde8a4" w={7.5} />

      <Haloed textAnchor="middle" stroke="#f0f0f0" strokeWidth="4" strokeLinejoin="round">
        {LABELS.map(([s, x, y, w, t, size, color, weight], i) => {
          const [px, py] = at(s, x, y);
          return (
            <text key={i} x={px} y={py} fontSize={size} fill={color} fontWeight={weight || 400} textLength={w * kx}>{t}</text>
          );
        })}
        <g fill="#6d4617" fontSize="18.5">
          <text transform="translate(745 497) rotate(90)" textLength="128">S Western Ave</text>
          <text transform="translate(746 947) rotate(90)" textLength="128">S Western Ave</text>
          <text transform="translate(1418 545) rotate(-7)" textLength="152">El Monte Busway</text>
        </g>
      </Haloed>

      <StateRoute s="A" x={1171} y={563} n="2" />
      <StateRoute s="A" x={1310} y={1298} n="110" w={40} />
      <StateRoute s="B" x={380} y={463} n="110" w={40} />
      <StateRoute s="D" x={630} y={377} n="60" />
      <StateRoute s="D" x={1193} y={444} n="60" />
      <g transform="translate(1061.500 450)">
        <path d="M-18 -14Q-14 -11 -9 -14Q-4 -11 0 -14Q4 -11 9 -14Q14 -11 18 -14L20 -8Q16 -2 19 5Q19 12 9 13Q4 13 0 16Q-4 13 -9 13Q-19 12 -19 5Q-16 -2 -20 -8Z" fill="#fff" stroke="#666" strokeWidth="2" />
        <text y="7" textAnchor="middle" fontSize="18" fill="#333">101</text>
      </g>
      <Interstate s="A" x={1209} y={688} n="5" />
      <Interstate s="B" x={39} y={1452} n="5" />
      <Interstate s="D" x={695} y={958} n="5" />
      <Interstate s="B" x={960} y={1225} n="10" w={33} />
      <Interstate s="D" x={24} y={209} n="10" w={33} />
      <Interstate s="D" x={552} y={258} n="710" w={46} />
      <Interstate s="D" x={524} y={967} n="710" w={46} />
      <Interstate s="C" x={817} y={1538} n="110" w={46} />

      <Poi s="A" x={1283} y={1038} fill="#6ab158"><path d="M-9 9h6l3 5 8-1v5q-8 5-12 3v-5h-5zM1 7l7 2M2 10l7 1" fill="#fff" stroke="#fff" /></Poi>
      <Poi s="A" x={832} y={1354} fill="#6ab158"><path d="M0 5l5 8h-3l4 7h-5v4h-2v-4h-5l4-7h-3z" fill="#fff" /></Poi>
      <Poi s="C" x={768} y={520} fill="#7f9db0"><path d="M-9 12l9-5 9 5v8h-2v-7l-7 4zM-5 16l5 3 5-3v3q-5 5-10 0z" fill="#fff" /></Poi>
      <path d="M1879 0h12l-6 10z" fill="#7f9db0" />

      <g transform="translate(1339 453)">
        <path d="M0 63C-2 42 -18 36 -18 18A18 18 0 0 1 18 18C18 36 2 42 0 63Z" fill="#ee7466" stroke="#7a3b36" strokeWidth="2" />
        <path d="M0 40v23" stroke="#222" strokeWidth="2.5" />
        <circle cy="18" r="5" fill="#000" />
      </g>

      <Haloed stroke="#fff" strokeWidth="3" strokeOpacity=".8">
        <text x="523" y="1055.500" fontSize="38" fontFamily={'Lato, "Open Sans", sans-serif'} fontWeight="600" textLength="124">
          <tspan fill="#4d87ee">G</tspan><tspan fill="#dc4f3e">o</tspan><tspan fill="#f4bd3a">o</tspan><tspan fill="#4d87ee">g</tspan><tspan fill="#51a35c">l</tspan><tspan fill="#dc4f3e">e</tspan>
        </text>
      </Haloed>
    </MapSvg>
  );
}

const Wordmark = styled.g`font-feature-settings: 'cv11';`;

function BrandLogo() {
  return (
    <Logo viewBox="0 0 500 190" fontFamily={'Inter, "Open Sans", sans-serif'} fontWeight="800">
      <Wordmark strokeWidth="1.500">
        <text x="-5" y="80.500" fontSize="110" fill="#53a8df" stroke="#53a8df" textLength="294" lengthAdjust="spacingAndGlyphs">Nurtur</text>
        <text x="-2" y="168.500" fontSize="110" fill="#000" stroke="#000" textLength="325" lengthAdjust="spacingAndGlyphs">Watch</text>
      </Wordmark>
      <g fill="none" stroke="#000" strokeWidth="6" strokeLinecap="round" strokeLinejoin="round">
        <rect x="331.500" y="103.500" width="37" height="72" rx="12" />
        <path d="M331 122.500H369M331 156H369" />
        <path d="M370 107.500Q386 95 413 80C421 76 430 79 431 87C431 97 420 101 410 107H478C490 107 491 122 480 125.500H435M480 125.500C502 126 502 143 484 144H435M484 144C495 147 494 162 478 162.500H432M474 162.500C477 174 472 180 464 180.500H397C386 180 378 175 370 170.500" />
      </g>
      <path d="M350 149C344 144 340 142 340.500 136C341 131 347 131 350 134.500C353 131 359 131 359.500 136C360 142 355 145 350 149Z" fill="#ee3524" />
    </Logo>
  );
}

const ExpandArrow = ({ show }) => (
  <Expander $show={show} viewBox="0 0 14 20"><path d="M2.500 2.500L11 10L2.500 17.500Z" fill="#fff" stroke="#b3b3b3" strokeWidth="2" /></Expander>
);
const TreeCheck = ({ on }) => (
  <Box viewBox="0 0 30 32">
    <defs><linearGradient id="cb" x1="0" y1="0" x2="1" y2="1"><stop offset="0" stopColor="#f4f4f4" /><stop offset=".5" stopColor="#d8d8d8" /><stop offset="1" stopColor="#ececec" /></linearGradient>
      <linearGradient id="ck" x1="0" y1="0" x2="0" y2="1"><stop offset="0" stopColor="#9bdc6a" /><stop offset="1" stopColor="#3c8f1c" /></linearGradient></defs>
    <rect x="2" y="3" width="26" height="26" fill="#f7f7f7" stroke="#acacac" strokeWidth="2" />
    <rect x="5" y="6" width="20" height="20" fill="url(#cb)" />
    {on && <path d="M1 12Q4 9 8 12L13 17L24 4Q28 3 29 8Q22 16 14 27Q6 22 1 12Z" fill="url(#ck)" />}
  </Box>
);

const DEVICES = [
  ['sample2'], ['sample', 0, 1], ['nwatch81', 0, 1], ['nwatch131', 1, 1], ['nwatch123'], ['nwatch59', 0, 1],
  ['nwatch144', 0, 1], ['cerna', 5, 38], ['nwatch134', 1, 1], ['nwatch138', 0, 1], ['nwatch145', 1, 1],
];
const FILTERS = ['All', 'Fall Down', 'Low Battery', 'Safe Zone Crossing', 'Fence - Position unknown', 'SOS', 'Offline', 'Movement', 'Call', 'Intrnational call blocked', 'Over Speed'];
const COLUMNS = ['Tracker Name', 'Alarm Type', 'Arrival Date', 'Address', 'Extra Information'];
const ROWS = ['25/07/2019 19:44:26', '25/07/2019 19:32:21', '25/07/2019 19:28:51'];
const ADDRESS = 'Allen Road, North York, Toronto, Ontario, Canada';

export default function App() {
  return (
    <Page>
      <Global />
      <Top>
        <Sidebar>
          <BrandLogo />
          <UserName>jacob</UserName>
          <Stats $cols="160px 160px 140px" $top={39}>
            <Stat><strong>12</strong>Online</Stat>
            <Stat><strong>198</strong>Offline</Stat>
            <Stat><strong>210</strong>Total</Stat>
          </Stats>
          <Stats $cols="227px 156px" $gap={38} $top={43}>
            <Stat><strong>356</strong>New alarms</Stat>
            <Stat><strong>0</strong>In progress alarms</Stat>
          </Stats>
          <Actions>
            <Action $large><FaCogs />Settings</Action>
            <Action $wrap><FaVolumeUp />Alarms management</Action>
            <Action><FaWrench />Program devices</Action>
            <Action><FaSignOutAlt />Logout</Action>
          </Actions>
        </Sidebar>
        <GutterV />
        <MapBox>
          <CityMap />
          <TypeSwitch><TypeTab $on>Map</TypeTab><TypeTab>Satellite</TypeTab></TypeSwitch>
          <Report><FaRegFileAlt /></Report>
          <Control $top={20} $h={80}>
            <svg width="36" height="36" fill="none" stroke="#666" strokeWidth="5"><path d="M2.500 12V2.500H12M24 2.500H33.500V12M33.500 24V33.500H24M12 33.500H2.500V24" /></svg>
          </Control>
          <Control $top={718} $h={80}>
            <svg width="36" height="62" viewBox="0 0 36 62">
              <path d="M9 22h18q3 2 4 8l2 14-4 1-3-10v25h-7l-1-16-1 16h-7V35l-3 10-4-1 2-14q1-6 4-8z" fill="#f5bc42" stroke="#7c7460" strokeWidth="1.500" />
              <path d="M11 22h14l-7 12z" fill="#dd8244" />
              <circle cx="18" cy="12" r="10.500" fill="#f5bc42" stroke="#7c7460" strokeWidth="1.500" />
            </svg>
          </Control>
          <Control $top={862} $h={162}>
            <ZoomCell><svg width="36" height="36"><path d="M14 0h8v14h14v8H22v14h-8V22H0v-8h14z" fill="#666" /></svg></ZoomCell>
            <Divider />
            <ZoomCell><svg width="36" height="8"><rect width="36" height="8" fill="#666" /></svg></ZoomCell>
          </Control>
          <Credits><span>Map data ©2019</span><span>Terms of Use</span><span>Report a map error</span></Credits>
        </MapBox>
        <GutterV />
        <Devices>
          <Tabs><Tab $on>Devices</Tab><Tab>Geo Fences</Tab><Tab>History</Tab><Tab>Point of interest</Tab></Tabs>
          <Toolbar>
            <Tool><FaSortAlphaDown /></Tool>
            <Tool><FaSortAmountUp /></Tool>
            <Tool><FaSortNumericDown /></Tool>
            <Tool $s={29}><FaSave /></Tool>
            <Tool>
              <svg viewBox="0 0 28 28" fill="none" stroke="#333" strokeWidth="3.600">
                <path d="M2.500 12A11.500 11.500 0 0 1 23.500 8M25.500 16A11.500 11.500 0 0 1 4.500 20M26.200 0V10.200H16M1.800 28V17.800H12" />
              </svg>
            </Tool>
            <Tool><FaPlus /></Tool>
          </Toolbar>
          <Label>Search device</Label>
          <Search />
          {DEVICES.map(([name, online, total], i) => {
            const folder = i < 2;
            const has = total !== undefined;
            return (
              <Row key={name}>
                <RowInner $state={name === 'cerna' ? 'on' : name === 'nwatch145' ? 'hover' : ''}>
                  <ExpandArrow show={has} />
                  <TreeCheck on={name === 'cerna'} />
                  <Kind $folder={folder}>{folder ? <FaFolderOpen /> : <FaCloud />}</Kind>
                  <Name>{name}</Name>
                  {has && <Count>(<Green>{online}</Green>/<Blue>{total}</Blue>)</Count>}
                </RowInner>
              </Row>
            );
          })}
        </Devices>
      </Top>
      <GutterH />
      <Bottom>
        <FilterBar>
          <FilterLabel>Filter by type:</FilterLabel>
          {FILTERS.map((f, i) => <FilterButton key={f} $on={f === 'Movement'} $gap={i === 0 ? 8 : undefined}>{f}</FilterButton>)}
        </FilterBar>
        <Grid>
          <CheckCell $head $bg="#f3f3f3"><Check /></CheckCell>
          {COLUMNS.map((c, i) => (
            <Head key={c} $last={i === 4}>
              <HeadTitle>
                {c}
                {i === 0 && <Sort width="17" height="9"><path d="M0 9L8.500 0L17 9Z" fill="#333" /></Sort>}
                <Chevron width="16" height="9" viewBox="0 0 16 9"><path d="M1 1L8 8L15 1" fill="none" stroke="#333" strokeWidth="1.800" /></Chevron>
              </HeadTitle>
              <HeadInput>
                {i === 1 && <>
                  <span>Movement</span>
                  <svg width="20" height="20"><path d="M4 4L16 16M16 4L4 16" stroke="#777" strokeWidth="5.500" strokeLinecap="round" /></svg>
                </>}
              </HeadInput>
            </Head>
          ))}
          {ROWS.map((date, r) => (
            <React.Fragment key={date}>
              <CheckCell $bg={r % 2 ? '#f3f3f3' : '#fdfdfd'}><Check /></CheckCell>
              <Cell>strack2</Cell>
              <Cell>Movement</Cell>
              <Cell>{date}</Cell>
              <Cell>{ADDRESS}</Cell>
              <Cell />
            </React.Fragment>
          ))}
        </Grid>
        <Shade />
        <OpenAlarms>
          <svg width="30" height="30" viewBox="0 0 30 30" fill="none" stroke="#fff" strokeWidth="3">
            <path d="M7 6V3.500Q7 1.500 9 1.500H26Q28.500 1.500 28.500 4V20Q28.500 22.500 26 22.500H24" />
            <rect x="1.500" y="7.500" width="21" height="21" rx="2" /><path d="M2 8h20v6H2z" fill="#fff" />
          </svg>
          Open alarms window
        </OpenAlarms>
        <Status>https://foxi.online/#</Status>
      </Bottom>
    </Page>
  );
}
